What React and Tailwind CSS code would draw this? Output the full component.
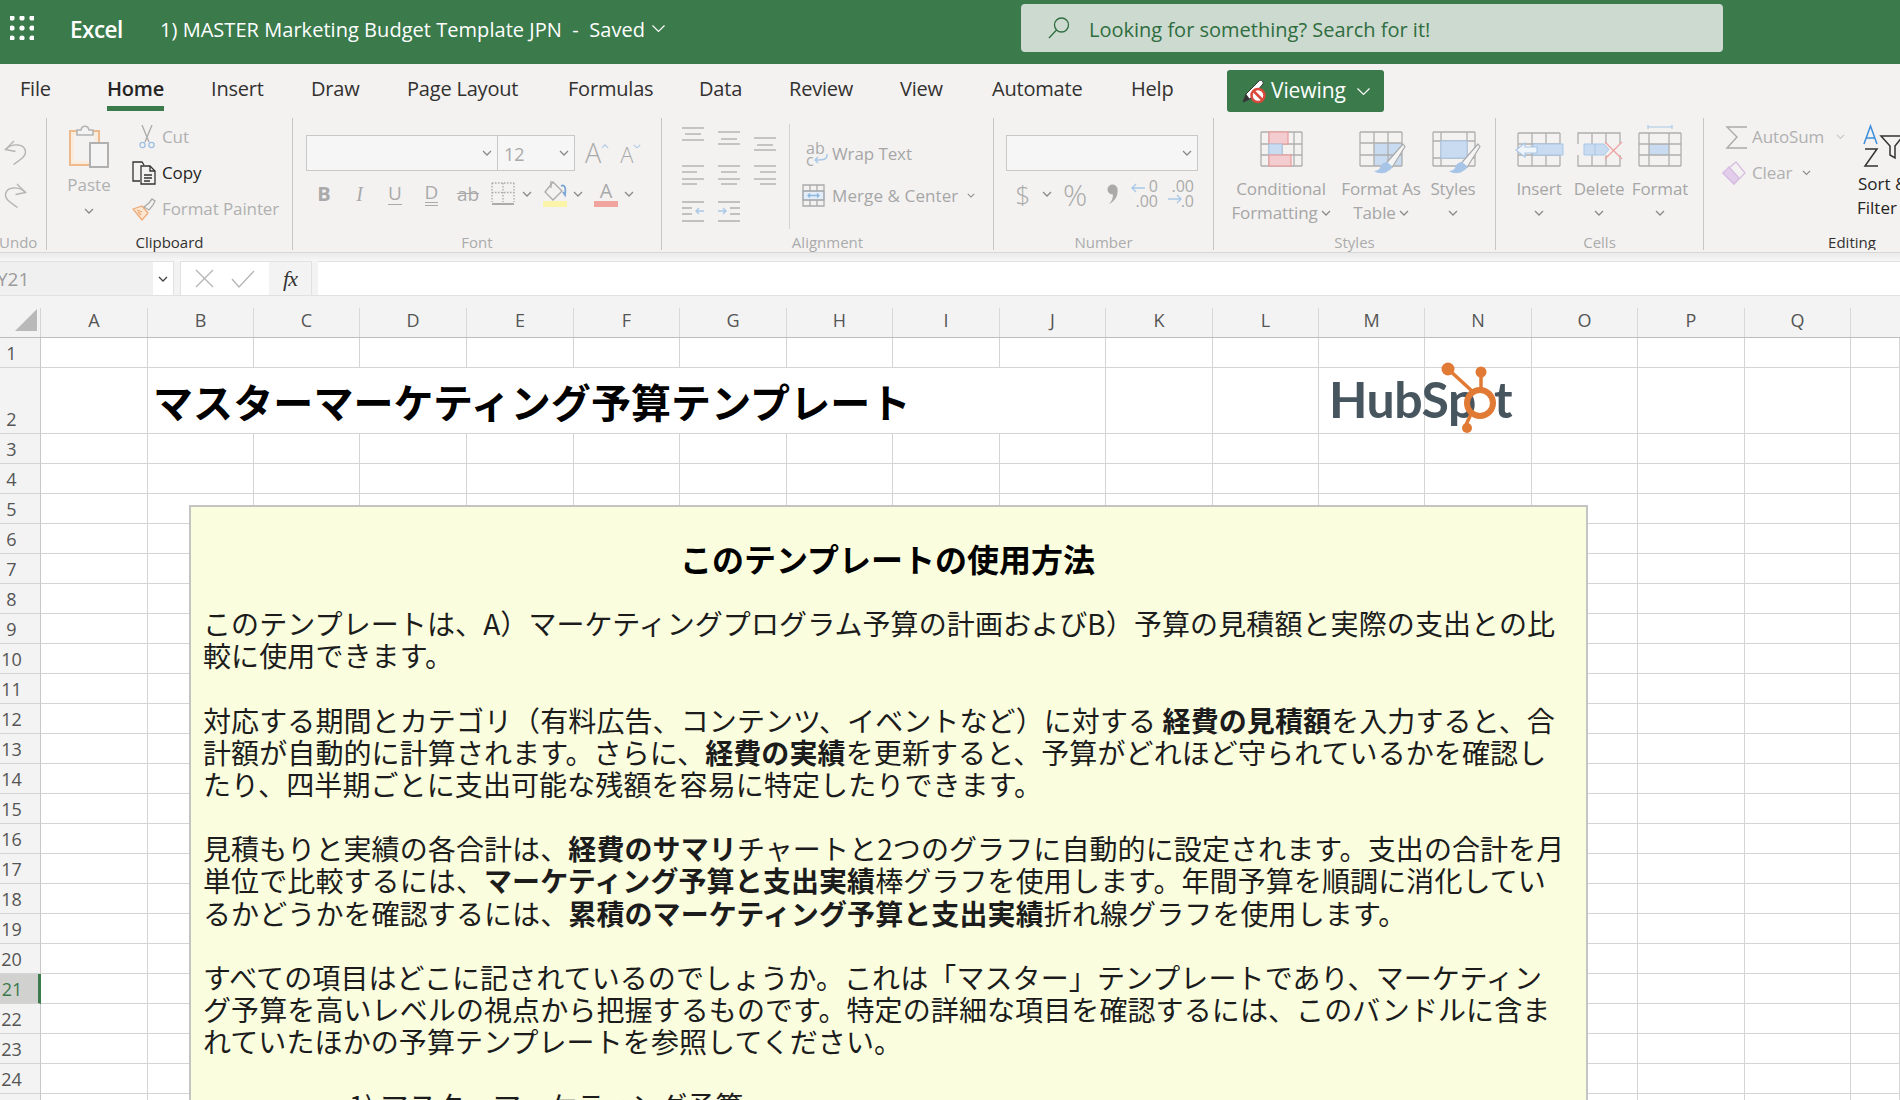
import React from "react";

const BL = "#a9c7e6";
const BF = "#c9dbf0";
const Chev = ({ c = "#8a8a8a", w = 10, cls = "" }) => (
  <svg width={w} height={w * 0.6} viewBox="0 0 10 6" className={cls} fill="none" stroke={c} strokeWidth={w > 10 ? 0.8 : 1.3}><path d="M1 1l4 4 4-4" /></svg>
);
const Undo = ({ flip }) => (
  <svg width="23" height="25" viewBox="0 0 23 25" fill="none" stroke="#b4b4b4" strokeWidth="1.4" style={flip ? { transform: "scaleX(-1)" } : undefined}>
    <path d="M10 1L1.5 9.5l10 2" /><path d="M1.5 9.5C8 3 21 3 21.5 12c.2 3.5-2 5.5-12 12.5" />
  </svg>
);
const Paste = () => (
  <svg width="40" height="44" viewBox="0 0 40 44" fill="none">
    <rect x="1" y="7" width="29" height="34" fill="#f9ecdc" stroke="#eeb98b" strokeWidth="2" />
    <rect x="5" y="11" width="21" height="26" fill="#f3f2f1" />
    <path d="M8 11V6h4c1-5 7-5 8 0h4v5z" fill="#f3f3f3" stroke="#b4b4b4" strokeWidth="1.6" />
    <rect x="21" y="19" width="18" height="24" fill="#f4f4f4" stroke="#b0b0b0" strokeWidth="2" />
  </svg>
);
const Cut = () => (
  <svg width="16" height="24" viewBox="0 0 16 24" fill="none" strokeWidth="1.3">
    <path d="M3 0l7 17M13 0L6 17" stroke="#aaa" />
    <circle cx="3.5" cy="20" r="2.6" stroke="#9dbfe3" /><circle cx="12.5" cy="20" r="2.6" stroke="#9dbfe3" />
  </svg>
);
const Copy = () => (
  <svg width="24" height="24" viewBox="0 0 24 24" fill="none" stroke="#333" strokeWidth="1.3">
    <path d="M8 20H1V1h9l2 3" />
    <path d="M9 5h9l5 5v13H9z" fill="#f3f2f1" /><path d="M18 5v5h5M12 14h8M12 17h8M12 20h6" />
  </svg>
);
const Painter = () => (
  <svg width="24" height="23" viewBox="0 0 24 23" fill="none" strokeWidth="1.3">
    <path d="M1 11l9-3 6 7-6 7z" fill="#fbe6d2" stroke="#eeaa76" /><path d="M10 14l-5-2M9 17l-3-3" stroke="#eeaa76" />
    <path d="M12 9l5-4 3-4 3 2-2 4-4 5z" fill="#f3f3f3" stroke="#aaa" />
  </svg>
);
const Search = () => (
  <svg width="22" height="22" viewBox="0 0 22 22" fill="none" stroke="#2f6d41" strokeWidth="1.3"><circle cx="13.5" cy="8" r="7" /><path d="M8.5 13L1 21" /></svg>
);
const Waffle = () => (
  <svg width="24" height="24" viewBox="0 0 24 24" fill="#fff">
    {[2, 12, 22].flatMap((y) => [2, 12, 22].map((x) => <circle key={x + "-" + y} cx={x} cy={y} r="2.6" />))}
  </svg>
);
const Lines = ({ ys, x1s, x2s }) => (
  <svg width="22" height="26" viewBox="0 0 22 26" stroke="#b0b0b0" strokeWidth="1.4">
    {ys.map((y, i) => <line key={y} x1={x1s[i]} x2={x2s[i]} y1={y} y2={y} />)}
  </svg>
);
const Indent = ({ inc }) => (
  <svg width="22" height="26" viewBox="0 0 22 26" fill="none" strokeWidth="1.4">
    <path d="M0 4h22M0 23h22" stroke="#b0b0b0" />
    <path d={inc ? "M12 10h10M12 16h10" : "M0 10h10M0 16h10"} stroke="#b0b0b0" />
    <path d={inc ? "M0 13h8M5 10l3 3-3 3" : "M22 13h-8M17 10l-3 3 3 3"} stroke={BL} />
  </svg>
);
const Wrap = () => (
  <svg width="22" height="18" viewBox="0 0 22 18" fill="none" strokeWidth="1.4">
    <path d="M21 7c1 6-4 6-12 6M12 10l-3 3 3 3" stroke={BL} />
  </svg>
);
const Merge = () => (
  <svg width="23" height="23" viewBox="0 0 23 23" fill="none" strokeWidth="1.3">
    <rect x="1" y="7" width="21" height="9" fill="#e3edf7" stroke={BL} />
    <path d="M1 1h21v21H1zM1 7h21M1 16h21M8 1v6M15 1v6M8 16v6M15 16v6" stroke="#aaa" />
    <path d="M6 11.500h11M8 9.500l-2 2 2 2M15 9.500l2 2-2 2" stroke="#8db7e0" />
  </svg>
);
const Decimal = ({ inc }) => (
  <svg width="26" height="24" viewBox="0 0 26 24" fill="none" strokeWidth="1.3">
    <path d={inc ? "M1 17h13M10 13l4 4-4 4" : "M1 7h13M5 3L1 7l4 4"} stroke={BL} />
  </svg>
);
const Comma = () => (
  <svg width="12" height="20" viewBox="0 0 12 20" fill="#aaa">
    <circle cx="6.500" cy="5.500" r="5" />
    <path d="M7 10c3-1 4.500-3 4.500-5 .8 7-2.500 12-8.500 15 3-3 4-6 4-10z" />
  </svg>
);
const Table = ({ xs, ys }) => (
  <g stroke="#aeaeae" strokeWidth="1.3" fill="none">
    {xs.map((x) => <line key={"x" + x} x1={x} x2={x} y1={ys[0]} y2={ys[ys.length - 1]} />)}
    {ys.map((y) => <line key={"y" + y} y1={y} y2={y} x1={xs[0]} x2={xs[xs.length - 1]} />)}
  </g>
);
const Brush = ({ dx = 0 }) => (
  <g transform={`translate(${dx} 0)`}>
    <path d="M47 19l2 2.500-13 21-6-4z" fill="#f5f5f5" stroke="#aaa" strokeWidth="1.2" />
    <path d="M31 37c-3 0-6 2-7 6-1 2-4 3-6 3 4 3 11 3 14 0 3-1 4-3 4-5z" fill="#a8c5e8" />
  </g>
);
const Big = ({ children }) => <svg width="50" height="46" viewBox="0 0 50 46" className="overflow-visible">{children}</svg>;
const CondIcon = () => (
  <Big>
    <Table xs={[5, 13, 26, 38, 46]} ys={[7, 19, 30, 41]} />
    <rect x="13" y="7" width="19" height="12" fill="#f3ccd0" stroke="#e99d9d" strokeWidth="1.200" />
    <rect x="13" y="19" width="13" height="11" fill={BF} stroke="#a9c7e6" strokeWidth="1" />
    <rect x="13" y="30" width="22" height="11" fill="#f3ccd0" stroke="#e99d9d" strokeWidth="1.200" />
  </Big>
);
const FmtTableIcon = () => (
  <Big>
    <rect x="18" y="18" width="28" height="23" fill={BF} />
    <Table xs={[4, 18, 32, 46]} ys={[7, 18, 30, 41]} />
    <Brush />
  </Big>
);
const StylesIcon = () => (
  <Big>
    <Table xs={[5, 13, 39, 47]} ys={[7, 16, 33, 41]} />
    <rect x="13" y="16" width="26" height="17" fill={BF} stroke={BL} strokeWidth="1" />
    <Brush dx="3" />
  </Big>
);
const InsertIcon = () => (
  <Big>
    <Table xs={[4, 18, 32, 46]} ys={[8, 19, 30, 41]} />
    <rect x="19" y="19" width="30" height="11" fill={BF} stroke={BL} strokeWidth="1" />
    <path d="M2 25l9-7v4h12v6H11v4z" fill="#f0f5fb" stroke={BL} strokeWidth="1.2" />
  </Big>
);
const DeleteIcon = () => (
  <Big>
    <path d="M4 19V8h42v11M4 30v11h42V30M18 8v11M32 8v11M18 30v11M32 30v11" fill="none" stroke="#aeaeae" strokeWidth="1.3" />
    <path d="M10 19h20l5 5.500-5 5.500H10z" fill={BF} stroke={BL} strokeWidth="1" /><path d="M21 19v11" stroke={BL} />
    <path d="M31 17l17 17M48 17L31 34" stroke="#eda3a3" strokeWidth="1.300" />
  </Big>
);
const FormatIcon = () => (
  <Big>
    <path d="M13 2h24M13 0v4M37 0v4" stroke={BL} strokeWidth="1.200" fill="none" />
    <rect x="14" y="19" width="20" height="11" fill={BF} />
    <Table xs={[4, 14, 34, 46]} ys={[8, 19, 30, 41]} />
  </Big>
);
const Sigma = () => (
  <svg width="23" height="23" viewBox="0 0 23 23" fill="none" stroke="#aaa" strokeWidth="1.4"><path d="M22 1H2l10 10L2 22h20" /></svg>
);
const Eraser = () => (
  <svg width="24" height="24" viewBox="0 0 24 24" strokeWidth="1.3">
    <path d="M14 1l9 11-11 11L1 12z" fill="none" stroke="#d7bde2" />
    <path d="M7 6l10 11-5 6L1 12z" fill="#e2cdea" stroke="#d7bde2" />
  </svg>
);
const SortIcon = () => (
  <svg width="40" height="42" viewBox="0 0 40 42" fill="none" strokeWidth="1.500" className="overflow-visible">
    <path d="M1 19L7.500 1 14 19M3.500 13h8" stroke="#3d8edb" />
    <path d="M2 24h12L2 41h13" stroke="#333" />
    <path d="M18 11h22l-8 10v12l-5-3v-9z" fill="#f3f2f1" stroke="#333" />
  </svg>
);
const Border = () => (
  <svg width="24" height="24" viewBox="0 0 24 24" fill="none">
    <path d="M1 1h22M1 1v19M23 1v19M12 1v19M1 10.500h22" stroke="#aaa" strokeWidth="1.300" strokeDasharray="1.500 1.500" />
    <path d="M1 22h22" stroke="#999" strokeWidth="1.600" />
  </svg>
);
const Bucket = () => (
  <svg width="26" height="20" viewBox="0 0 26 20" fill="none" strokeWidth="1.300">
    <path d="M11 1l-8 10 8 8 9-9z" stroke="#aaa" /><path d="M9 0v7" stroke="#aaa" />
    <path d="M19 5c4-2 5 2 4 9l-2-3" stroke="#7aa7d6" strokeWidth="1.800" />
  </svg>
);
const Pencil = () => (
  <svg width="24" height="25" viewBox="0 0 24 25" fill="none">
    <path d="M1 23l3-8L17 2c2-2 5 1 4 3L8 20z" fill="#fff" stroke="#333" strokeWidth="1" />
    <path d="M1 23l3-8 4 5z" fill="#333" />
    <circle cx="16" cy="16.500" r="6.500" fill="#fff" stroke="#d9483b" strokeWidth="2.500" /><path d="M12 12.500l8 8" stroke="#d9483b" strokeWidth="2.500" />
  </svg>
);

const Tab = ({ w, active, children }) => (
  <div className={w}>
    <span className={"inline-block leading-[28px] text-[20px] tracking-[-0.2px] " + (active ? "font-semibold text-[#252423] pb-[3px] border-b-[5px] border-[#3a7a4b] -ml-[1px]" : "text-[#323130]")}>{children}</span>
  </div>
);
const GLabel = ({ children, dark, cls = "text-center" }) => (
  <div className={"h-[17px] -mt-[1px] leading-[20px] text-[15px] whitespace-nowrap " + cls + " " + (dark ? "text-[#323130]" : "text-[#ababab]")}>{children}</div>
);
const Group = ({ w, label, dark, labelCls, children }) => (
  <div className={"shrink-0 flex flex-col h-full border-r border-[#c8c6c4] " + w}>
    <div className="h-[115px] flex">{children}</div>
    <GLabel dark={dark} cls={labelCls}>{label}</GLabel>
  </div>
);
const SmallRow = ({ slot, icon, dark, children, chev }) => (
  <div className="h-[36px] flex items-center">
    <div className={slot + " flex justify-end shrink-0"}>{icon}</div>
    <span className={"text-[17px] leading-[24px] whitespace-nowrap tracking-[-0.1px] " + (dark ? "text-[#252423]" : "text-[#b0b0b0]")}>{children}</span>
    {chev}
  </div>
);
const BigBtn = ({ w, icon, lines, chevInline, chevBelow }) => (
  <div className={"flex flex-col items-center shrink-0 pt-[7px] " + w}>
    {icon}
    <div className="mt-[6px] text-[17px] leading-[24px] text-[#a6a6a6] text-center whitespace-nowrap tracking-[-0.1px]">
      {lines.map((l, i) => (
        <div key={l} className="flex items-center justify-center gap-[3px]">
          {l}
          {chevInline && i === lines.length - 1 ? <Chev /> : null}
        </div>
      ))}
      {chevBelow ? <div className="h-[24px] flex items-center justify-center"><Chev /></div> : null}
    </div>
  </div>
);
const Slot = ({ w, cls = "", children }) => <div className={"shrink-0 flex justify-center items-center h-[26px] " + w + " " + cls}>{children}</div>;
const SelectBox = ({ w, chev }) => (
  <div className={"h-[36px] bg-[#f6f6f6] border-[1.5px] border-[#c8c8c8] flex items-center justify-end pr-[4px] " + w}>{chev}</div>
);

const COLS = "ABCDEFGHIJKLMNOPQ".split("");
const WIDTHS = [107, 106, 106, 107, 107, 106, 107, 106, 107, 106, 107, 106, 106, 107, 106, 107, 106];
const COL_W = ["w-[107px]", "w-[106px]"];
const ROWS = Array.from({ length: 25 }, (_, i) => i + 1);

const B = ({ children }) => <b className="font-bold">{children}</b>;
const BODY = [
  [<>このテンプレートは、A）マーケティングプログラム予算の計画およびB）予算の見積額と実際の支出との比</>, <>較に使用できます。</>],
  [<>対応する期間とカテゴリ（有料広告、コンテンツ、イベントなど）に対する <B>経費の見積額</B>を入力すると、合</>, <>計額が自動的に計算されます。さらに、<B>経費の実績</B>を更新すると、予算がどれほど守られているかを確認し</>, <>たり、四半期ごとに支出可能な残額を容易に特定したりできます。</>],
  [<>見積もりと実績の各合計は、<B>経費のサマリ</B>チャートと2つのグラフに自動的に設定されます。支出の合計を月</>, <>単位で比較するには、<B>マーケティング予算と支出実績</B>棒グラフを使用します。年間予算を順調に消化してい</>, <>るかどうかを確認するには、<B>累積のマーケティング予算と支出実績</B>折れ線グラフを使用します。</>],
  [<>すべての項目はどこに記されているのでしょうか。これは「マスター」テンプレートであり、マーケティン</>, <>グ予算を高いレベルの視点から把握するものです。特定の詳細な項目を確認するには、このバンドルに含ま</>, <>れていたほかの予算テンプレートを参照してください。</>],
];

export default function App() {
  return (
    <div className="w-[1900px] h-[1100px] overflow-hidden flex flex-col bg-[#f3f3f3] [font-family:'Open_Sans','Noto_Sans_CJK_JP',sans-serif]">
      {/* Title bar */}
      <div className="h-[64px] shrink-0 bg-[#3a7a4b] flex items-start pt-[4px] text-white">
        <div className="w-[70px] h-[48px] pl-[10px] flex items-center"><Waffle /></div>
        <div className="w-[90px] h-[48px] flex items-center pt-[3px] text-[22.500px] font-semibold tracking-[-0.5px]">Excel</div>
        <div className="w-[491px] h-[48px] flex items-center pt-[3px] text-[20px] tracking-[0.04px] whitespace-pre">{"1) MASTER Marketing Budget Template JPN  -  Saved"}</div>
        <div className="w-[15px] h-[48px] flex items-center"><Chev c="#fff" w={15} /></div>
        <div className="ml-[355px] w-[702px] h-[48px] bg-[#cddacf] rounded-[4px] flex items-center text-[#2f6d41]">
          <div className="pl-[27px] w-[68px]"><Search /></div>
          <span className="text-[20px] pt-[3px]">Looking for something? Search for it!</span>
        </div>
      </div>

      {/* Ribbon */}
      <div className="shrink-0 bg-[#f3f2f1] h-[189px] border-b border-[#d8d8d8]">
        <div className="h-[54px] flex pt-[11px] pl-[20px]">
          <Tab w="w-[88px]">File</Tab>
          <Tab w="w-[103px]" active>Home</Tab>
          <Tab w="w-[100px]">Insert</Tab>
          <Tab w="w-[96px]">Draw</Tab>
          <Tab w="w-[161px]">Page Layout</Tab>
          <Tab w="w-[131px]">Formulas</Tab>
          <Tab w="w-[90px]">Data</Tab>
          <Tab w="w-[111px]">Review</Tab>
          <Tab w="w-[92px]">View</Tab>
          <Tab w="w-[139px]">Automate</Tab>
          <Tab w="w-[96px]">Help</Tab>
          <div className="-mt-[5px] w-[157px] h-[42px] bg-[#3a7a4b] rounded-[3px] flex items-center pl-[15px] text-white">
            <Pencil />
            <span className="ml-[5px] text-[21px] tracking-[-0.1px]">Viewing</span>
            <Chev c="#fff" w={15} cls="ml-[10px]" />
          </div>
        </div>
        <div className="h-[132px] flex">
          <Group w="w-[47px]" label="Undo" labelCls="text-left -ml-[1px]">
            <div className="pl-[4px] pt-[22px] flex flex-col gap-[18px]"><Undo /><Undo flip /></div>
          </Group>
          <Group w="w-[246px]" label="Clipboard" dark labelCls="text-center">
            <div className="w-[84px] flex flex-col items-center pt-[6px]">
              <Paste />
              <span className="mt-[7px] text-[17px] leading-[20px] text-[#b0b0b0]">Paste</span>
              <Chev cls="mt-[13px]" />
            </div>
            <div className="pt-[1px]">
              <SmallRow slot="w-[31px] pr-[7px]" icon={<Cut />}>Cut</SmallRow>
              <SmallRow slot="w-[31px] pr-[6px]" icon={<Copy />} dark>Copy</SmallRow>
              <SmallRow slot="w-[31px] pr-[6px]" icon={<Painter />}>Format Painter</SmallRow>
            </div>
          </Group>
          <Group w="w-[369px]" label="Font" labelCls="text-center">
            <div className="pl-[13px] pt-[17px]">
              <div className="flex items-center">
                <SelectBox w="w-[192px]" chev={<Chev cls="mr-[1px]" />} />
                <div className="w-[78px] -ml-[1px] h-[36px] bg-[#f6f6f6] border-[1.5px] border-[#c8c8c8] flex items-center justify-between pl-[6px] pr-[5px] text-[18px] text-[#aaa]"><span className="pt-[3px]">12</span><Chev /></div>
                <div className="flex items-start ml-[10px] text-[#aaa]">
                  <span className="text-[27px] leading-[32px] font-light">A</span><Chev c={BL} w={8} cls="rotate-180 mt-[7px]" />
                  <span className="ml-[11px] text-[22px] leading-[32px] mt-[1px] font-light">A</span><Chev c={BL} w={8} cls="mt-[7px]" />
                </div>
              </div>
              <div className="flex items-center mt-[10px] text-[#aaa]">
                <Slot w="w-[36px]"><span className="text-[20px] font-bold">B</span></Slot>
                <Slot w="w-[35px]"><span className="text-[20px] italic [font-family:'Liberation_Serif',serif]">I</span></Slot>
                <Slot w="w-[36px]"><span className="text-[19px] leading-[21px] border-b-[1.5px] border-[#aaa]">U</span></Slot>
                <Slot w="w-[37px]"><span className="text-[19px] leading-[20px] border-b-[4px] border-double border-[#aaa]">D</span></Slot>
                <Slot w="w-[36px]"><span className="text-[19px] line-through">ab</span></Slot>
                <Slot w="w-[34px]"><Border /></Slot>
                <Slot w="w-[14px]"><Chev /></Slot>
                <Slot w="w-[30px]" cls="ml-[6px] flex-col"><Bucket /><div className="w-[24px] h-[6px] bg-[#fbf3a8]" /></Slot>
                <Slot w="w-[16px]"><Chev /></Slot>
                <Slot w="w-[32px]" cls="ml-[4px] flex-col"><span className="text-[20px] leading-[20px]">A</span><div className="w-[24px] h-[6px] bg-[#f1a39e]" /></Slot>
                <Slot w="w-[14px]"><Chev /></Slot>
              </div>
            </div>
          </Group>
          <Group w="w-[332px]" label="Alignment" labelCls="text-center">
            <div className="w-[128px] h-[105px] mt-[6px] border-r border-[#d5d3d1] pl-[20px] pt-[2px] grid grid-cols-[22px_22px_22px] gap-x-[14px] grid-rows-[26px_26px_26px] gap-y-[10px] content-start">
              <Lines ys={[2, 8, 14]} x1s={[0, 3, 0]} x2s={[22, 19, 22]} />
              <Lines ys={[6, 13, 18]} x1s={[0, 3, 0]} x2s={[22, 19, 22]} />
              <Lines ys={[12, 19, 24]} x1s={[0, 3, 0]} x2s={[22, 19, 22]} />
              <Lines ys={[4, 10, 17, 22]} x1s={[0, 0, 0, 0]} x2s={[22, 15, 22, 15]} />
              <Lines ys={[4, 10, 17, 22]} x1s={[0, 3, 0, 3]} x2s={[22, 19, 22, 19]} />
              <Lines ys={[4, 10, 17, 22]} x1s={[0, 6, 0, 6]} x2s={[22, 22, 22, 22]} />
              <Indent />
              <Indent inc />
            </div>
            <div className="pt-[22px]">
              <div className="h-[28px] flex items-center">
                <div className="relative w-[42px] pl-[16px] text-[16px] leading-[12px] text-[#aaa]">
                  <div>ab</div><div>c</div>
                  <div className="absolute left-[16px] top-[5px]"><Wrap /></div>
                </div>
                <span className="text-[17px] leading-[24px] text-[#a6a6a6] tracking-[-0.1px]">Wrap Text</span>
              </div>
              <div className="h-[28px] mt-[13px] pt-[1px] flex items-center">
                <div className="w-[42px] pl-[12px]"><Merge /></div>
                <span className="text-[17px] leading-[24px] text-[#a6a6a6] tracking-[0.1px]">Merge &amp; Center</span>
                <Chev cls="ml-[9px]" w={8} />
              </div>
            </div>
          </Group>
          <Group w="w-[220px]" label="Number" labelCls="text-center">
            <div className="pl-[12px] pt-[17px]">
              <SelectBox w="w-[192px]" chev={<Chev cls="mr-[1px]" />} />
              <div className="flex items-center mt-[10px] text-[#aaa]">
                <Slot w="w-[34px]"><span className="text-[26px] font-light">$</span></Slot>
                <Slot w="w-[14px]"><Chev /></Slot>
                <Slot w="w-[42px]"><span className="text-[30px] font-light">%</span></Slot>
                <Slot w="w-[32px]"><Comma /></Slot>
                <Slot w="w-[32px]" cls="ml-[2px] relative text-[16px] leading-[15px]">
                  <div className="text-right w-[24px]"><div>0</div><div>.00</div></div>
                  <div className="absolute left-[1px] top-[0px]"><Decimal /></div>
                </Slot>
                <Slot w="w-[32px]" cls="ml-[4px] relative text-[16px] leading-[15px]">
                  <div className="text-right w-[24px]"><div>.00</div><div>.0</div></div>
                  <div className="absolute left-[1px] top-[1px]"><Decimal inc /></div>
                </Slot>
              </div>
            </div>
          </Group>
          <Group w="w-[282px]" label="Styles" labelCls="text-center">
            <div className="w-[13px] shrink-0" />
            <BigBtn w="w-[108px]" icon={<CondIcon />} lines={["Conditional", "Formatting"]} chevInline />
            <BigBtn w="w-[92px]" icon={<FmtTableIcon />} lines={["Format As", "Table"]} chevInline />
            <BigBtn w="w-[52px]" icon={<StylesIcon />} lines={["Styles"]} chevBelow />
          </Group>
          <Group w="w-[208px]" label="Cells" labelCls="text-center">
            <div className="w-[13px] shrink-0" />
            <BigBtn w="w-[60px]" icon={<InsertIcon />} lines={["Insert"]} chevBelow />
            <BigBtn w="w-[60px]" icon={<DeleteIcon />} lines={["Delete"]} chevBelow />
            <BigBtn w="w-[62px]" icon={<FormatIcon />} lines={["Format"]} chevBelow />
          </Group>
          <div className="flex-1 flex flex-col h-full overflow-hidden">
            <div className="h-[115px] flex">
              <div className="w-[153px] shrink-0 pt-[1px]">
                <SmallRow slot="w-[48px] pr-[4px]" icon={<Sigma />} chev={<Chev w={9} cls="ml-[12px]" c="#c8c8c8" />}>AutoSum</SmallRow>
                <SmallRow slot="w-[48px] pr-[6px]" icon={<Eraser />} chev={<Chev w={9} cls="ml-[10px]" />}>Clear</SmallRow>
              </div>
              <div className="pl-[6px] pt-[7px] text-[17px] leading-[24px] text-[#252423] whitespace-nowrap">
                <SortIcon />
                <div className="-ml-[5px] mt-[5px]">Sort &amp;</div>
                <div className="-ml-[6px]">Filter</div>
              </div>
            </div>
            <GLabel dark cls="text-center pl-[100px]">Editing</GLabel>
          </div>
        </div>
      </div>
      <div className="h-[8px] shrink-0 bg-gradient-to-b from-[#eaeaea] to-[#f7f7f7]" />

      {/* Formula bar */}
      <div className="h-[35px] shrink-0 flex border-b border-[#e1e1e1] bg-[#f3f3f3]">
        <div className="w-[174px] flex border-t border-r border-[#e1e1e1]">
          <div className="w-[153px] bg-[#f0f0f0] text-[19px] leading-[34px] text-[#9b9b9b] overflow-hidden"><span className="block -ml-[3px]">Y21</span></div>
          <div className="flex-1 bg-white flex items-center justify-center"><Chev c="#444" /></div>
        </div>
        <div className="ml-[6px] w-[132px] flex border border-b-0 border-[#e1e1e1]">
          <div className="w-[88px] bg-white flex items-center justify-around pl-[6px] pr-[6px]">
            <svg width="19" height="19" viewBox="0 0 19 19" stroke="#b5b5b5" strokeWidth="1.300"><path d="M1 1l17 17M18 1L1 18" /></svg>
            <svg width="24" height="18" viewBox="0 0 24 18" fill="none" stroke="#b5b5b5" strokeWidth="1.300"><path d="M1 9l7 8L23 1" /></svg>
          </div>
          <div className="flex-1 flex items-center justify-center text-[22px] italic text-[#333] [font-family:'Liberation_Serif',serif] tracking-[-1px]">fx</div>
        </div>
        <div className="ml-[6px] flex-1 bg-white border-t border-[#e1e1e1]" />
      </div>

      {/* Column headers */}
      <div className="h-[42px] shrink-0 flex border-b-[1.5px] border-[#bdbdbd] pt-[12px] bg-[#f3f3f3]">
        <div className="w-[41px] shrink-0 pl-[15px] pr-[4px] pt-[1px] border-r border-[#d4d4d4]">
          <svg width="22" height="22" viewBox="0 0 22 22" fill="#b9b9b9"><path d="M22 0v22H0z" /></svg>
        </div>
        {COLS.map((c, i) => (
          <div key={c} className={"shrink-0 text-center text-[18px] leading-[24px] text-[#555] border-r border-[#d8d8d8] " + COL_W[WIDTHS[i] === 107 ? 0 : 1]}>{c}</div>
        ))}
      </div>

      {/* Sheet */}
      <div className="flex-1 min-h-0 flex overflow-hidden bg-white">
        <div className="w-[41px] shrink-0 grid grid-rows-[30px_66px_repeat(23,30px)] bg-[#f3f3f3] content-start">
          {ROWS.map((r) => (
            <div key={r} className={"flex justify-center text-[18px] leading-[24px] border-b border-[#d4d4d4] " + (r === 2 ? "items-end " : "items-center ") + (r === 2 ? "pb-[2px] " : "") + (r === 21 ? "bg-[#d1d1cf] text-[#3a7a4b] border-r-[3px] border-r-[#3a7a4b] pr-[14px]" : "text-[#555] border-r border-r-[#c8c8c8] pr-[17px]")}>{r}</div>
          ))}
        </div>
        <div className="relative flex-1 min-w-0">
          <div className="grid grid-cols-[107px_106px_106px_107px_107px_106px_107px_106px_107px_106px_107px_106px_106px_107px_106px_107px_106px_49px] grid-rows-[30px_66px_repeat(23,30px)] content-start">
            {ROWS.flatMap((r) =>
              Array.from({ length: 18 }, (_, c) => {
                if (r === 2 && c >= 2 && c <= 9) return null;
                if (r === 2 && c === 1) {
                  return (
                    <div key="title" className="col-span-9 border-r border-b border-[#d4d4d4] flex items-center pl-[5px] text-[40px] leading-[50px] font-bold tracking-[0.1px] text-black [font-family:'Noto_Sans_CJK_JP',sans-serif] whitespace-nowrap">
                      マスターマーケティング予算テンプレート
                    </div>
                  );
                }
                return <div key={r + "-" + c} className="border-r border-b border-[#d4d4d4]" />;
              })
            )}
          </div>

          {/* HubSpot logo (floating picture) */}
          <div className="absolute left-[1292px] top-[29px] w-[180px] h-[66px] text-[#47555e]">
            <span className="absolute -left-[4px] top-[2px] text-[50px] leading-[60px] font-bold tracking-[-0.5px] [font-family:'Lato',sans-serif]">HubSp</span>
            <span className="absolute left-[161px] top-[2px] text-[50px] leading-[60px] font-bold [font-family:'Lato',sans-serif]">t</span>
            <svg className="absolute left-[105px] top-[-5px]" width="70" height="72" viewBox="0 0 70 72" fill="none" stroke="#e07a35">
              <circle cx="42" cy="41" r="13" strokeWidth="6" />
              <path d="M10 7l24 22" strokeWidth="3.500" /><path d="M43 10v18" strokeWidth="3.500" /><path d="M33 52L27 65" strokeWidth="3.500" />
              <circle cx="10" cy="7" r="6.500" fill="#e07a35" stroke="none" /><circle cx="43" cy="10" r="5.500" fill="#e07a35" stroke="none" /><circle cx="29" cy="66" r="5" fill="#e07a35" stroke="none" />
            </svg>
          </div>

          {/* Text box */}
          <div className="absolute left-[148px] top-[167px] w-[1399px] h-[640px] bg-[#fafedf] border-2 border-[#c4c4c4] pl-[12px] pt-[35px] [font-family:'Noto_Sans_CJK_JP',sans-serif] text-[28px] leading-[32.15px] tracking-[0.1px] text-[#1c1c1c] whitespace-nowrap">
            <div className="text-center font-bold text-[32px] tracking-normal text-black pr-[14px]">このテンプレートの使用方法</div>
            <div className="h-[33px]" />
            {BODY.map((p, i) => (
              <div key={i} className="mb-[32.15px]">
                {p.map((l, j) => <div key={j}>{l}</div>)}
              </div>
            ))}
            <div className="pl-[146px]">1) マスターマーケティング予算</div>
          </div>
        </div>
      </div>
    </div>
  );
}
